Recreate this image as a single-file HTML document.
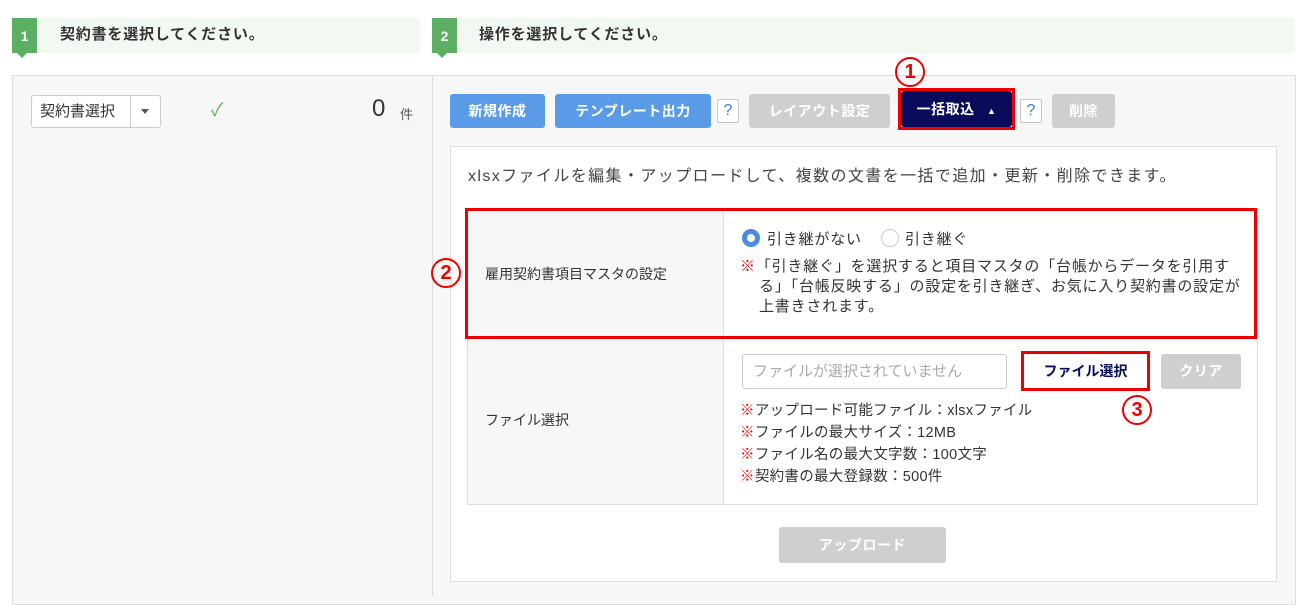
<!DOCTYPE html>
<html><head><meta charset="utf-8"><style>
*{box-sizing:border-box;margin:0;padding:0}
body{width:1308px;height:591px;background:#fff;font-family:"Liberation Sans","Noto Sans CJK JP",sans-serif;color:#333;position:relative;overflow:hidden}
.a{position:absolute}
.bar{background:#f2f8f2;height:35px;top:18px}
.badge{background:#5cae62;color:#fff;font-weight:bold;font-size:14px;width:25px;height:35px;top:18px;text-align:center;line-height:37px}
.badge:after{content:"";position:absolute;left:5px;bottom:-5px;border-left:5px solid transparent;border-right:5px solid transparent;border-top:5px solid #5cae62}
.st{font-size:15px;letter-spacing:0.8px;font-weight:bold;top:18px;line-height:33px;color:#333}
.btn{top:94px;height:34px;border-radius:3px;color:#fff;font-weight:bold;font-size:14px;letter-spacing:0.5px;text-align:center;line-height:34px}
.blue{background:#5a9be8}.gray{background:#cfcfcf}
.q{top:99px;width:22px;height:24px;border:1px solid #c8c8c8;border-radius:2px;color:#3a7bd5;font-size:16px;text-align:center;line-height:22px;background:#fff}
.circ{color:#e00;font-weight:bold;width:30px;height:30px;border:2px solid #e00;border-radius:50%;text-align:center;line-height:27px;font-size:20px}
.k{color:#e00}
</style></head><body>
<div class="a bar" style="left:12px;width:408px"></div>
<div class="a badge" style="left:12px">1</div>
<div class="a st" style="left:60px">契約書を選択してください。</div>
<div class="a bar" style="left:432px;width:863px"></div>
<div class="a badge" style="left:432px">2</div>
<div class="a st" style="left:479px">操作を選択してください。</div>

<div class="a" style="left:12px;top:75px;width:1284px;height:530px;border:1px solid #ddd;background:#f7f7f7"></div>
<div class="a" style="left:432px;top:76px;width:1px;height:520px;background:#ddd"></div>

<div class="a" style="left:31px;top:95px;width:130px;height:33px;border:1px solid #ccc;border-radius:3px;background:#fff"></div>
<div class="a" style="left:40px;top:95px;font-size:15px;line-height:33px">契約書選択</div>
<div class="a" style="left:130px;top:96px;width:1px;height:31px;background:#ccc"></div>
<div class="a" style="left:141px;top:109px;border-left:4px solid transparent;border-right:4px solid transparent;border-top:5px solid #555"></div>
<div class="a" style="left:211px;top:96px;color:#5cae62;font-size:18px">✓</div>
<div class="a" style="left:372px;top:95px;font-size:24px;color:#333">0</div>
<div class="a" style="left:400px;top:104px;font-size:13px;color:#555">件</div>

<div class="a btn blue" style="left:450px;width:95px">新規作成</div>
<div class="a btn blue" style="left:555px;width:156px">テンプレート出力</div>
<div class="a q" style="left:717px">?</div>
<div class="a btn gray" style="left:749px;width:141px">レイアウト設定</div>
<div class="a" style="left:898px;top:88px;width:117px;height:42px;border:3px solid #e00"></div>
<div class="a btn" style="left:901px;top:91px;width:111px;height:36px;line-height:36px;background:#0b0b5c">一括取込 <span style="font-size:9px;margin-left:8px">▲</span></div>
<div class="a q" style="left:1020px">?</div>
<div class="a btn gray" style="left:1052px;width:63px">削除</div>
<div class="a circ" style="left:895px;top:57px">1</div>

<div class="a" style="left:450px;top:146px;width:827px;height:436px;background:#fff;border:1px solid #ddd"></div>
<div class="a" style="left:468px;top:162px;font-size:16px;letter-spacing:1.4px;color:#444;white-space:nowrap">xlsxファイルを編集・アップロードして、複数の文書を一括で追加・更新・削除できます。</div>

<div class="a" style="left:467px;top:209px;width:791px;height:296px;border:1px solid #ddd"></div>
<div class="a" style="left:468px;top:210px;width:256px;height:294px;background:#f7f7f7;border-right:1px solid #ddd"></div>
<div class="a" style="left:467px;top:338px;width:791px;height:1px;background:#ddd"></div>
<div class="a" style="left:485px;top:264px;font-size:14px">雇用契約書項目マスタの設定</div>
<div class="a" style="left:485px;top:410px;font-size:14px">ファイル選択</div>

<div class="a" style="left:742px;top:229px;width:18px;height:18px;border-radius:50%;border:5px solid #4a8de0"></div>
<div class="a" style="left:767px;top:228px;font-size:15px;letter-spacing:0.8px">引き継がない</div>
<div class="a" style="left:881px;top:229px;width:18px;height:18px;border-radius:50%;border:1px solid #ccc"></div>
<div class="a" style="left:905px;top:228px;font-size:15px;letter-spacing:0.8px">引き継ぐ</div>
<div class="a" style="left:740px;top:257px;font-size:15px;letter-spacing:0.8px;line-height:20px;width:505px;padding-left:19px;text-indent:-19px"><span class="k">※</span>「引き継ぐ」を選択すると項目マスタの「台帳からデータを引用する」「台帳反映する」の設定を引き継ぎ、お気に入り契約書の設定が上書きされます。</div>
<div class="a" style="left:465px;top:208px;width:792px;height:131px;border:3px solid #e00"></div>
<div class="a circ" style="left:431px;top:258px">2</div>

<div class="a" style="left:742px;top:354px;width:265px;height:35px;border:1px solid #ccc;border-radius:3px;font-size:15px;color:#aaa;line-height:33px;padding-left:10px">ファイルが選択されていません</div>
<div class="a" style="left:1021px;top:351px;width:129px;height:40px;border:3px solid #e00;background:#fff;color:#0b0b5c;font-weight:bold;font-size:14px;text-align:center;line-height:34px">ファイル選択</div>
<div class="a btn gray" style="left:1161px;top:354px;width:80px;height:35px">クリア</div>
<div class="a circ" style="left:1122px;top:395px">3</div>
<div class="a" style="left:740px;top:400px;font-size:14.5px;line-height:22px;letter-spacing:0.3px">
<div><span class="k">※</span>アップロード可能ファイル：xlsxファイル</div>
<div><span class="k">※</span>ファイルの最大サイズ：12MB</div>
<div><span class="k">※</span>ファイル名の最大文字数：100文字</div>
<div><span class="k">※</span>契約書の最大登録数：500件</div></div>

<div class="a btn gray" style="left:779px;top:527px;width:167px;height:36px;line-height:36px">アップロード</div>
</body></html>
